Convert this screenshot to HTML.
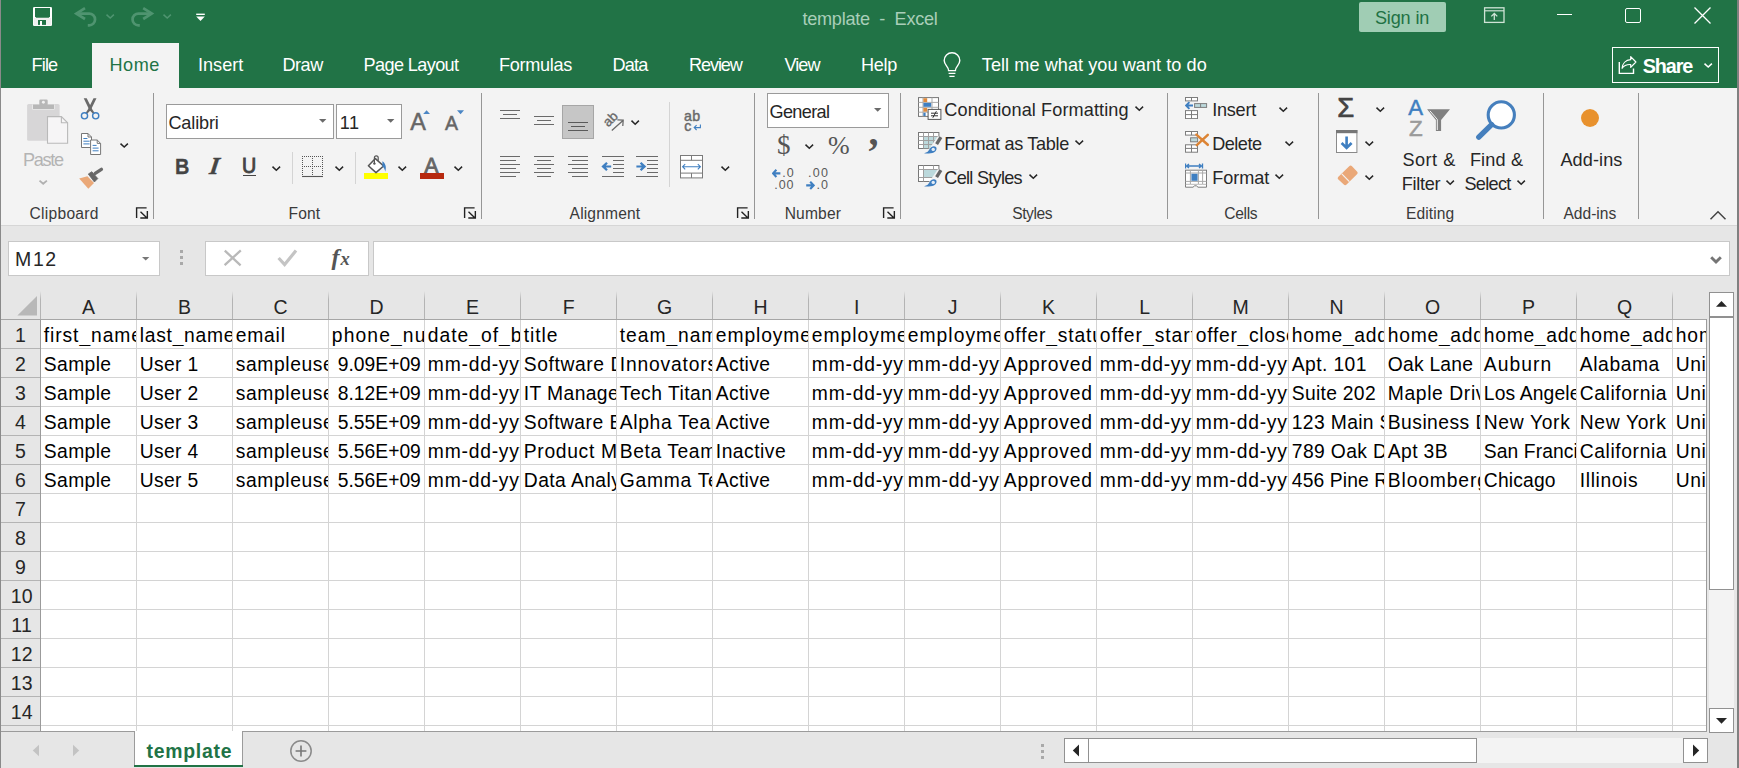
<!DOCTYPE html>
<html lang="en"><head><meta charset="utf-8"><title>template - Excel</title>
<style>
html,body{margin:0;padding:0;background:#fff;overflow:hidden}
#r{position:relative;width:1739px;height:768px;overflow:hidden;background:#e6e6e6;font-family:"Liberation Sans",sans-serif}
.a{position:absolute;display:block}
.t{white-space:pre}
.c{position:absolute;overflow:hidden;white-space:pre}
</style></head>
<body><div id="r">
<div class="a" style="left:0px;top:0px;width:1739px;height:88px;background:#217346;"></div>
<div class="a" style="left:0px;top:88px;width:1739px;height:138px;background:#f3f3f3;"></div>
<div class="a" style="left:0px;top:225px;width:1739px;height:1px;background:#d6d6d6;"></div>
<div class="a" style="left:0px;top:226px;width:1739px;height:542px;background:#e6e6e6;"></div>
<svg class="a" style="left:33px;top:7px" width="19" height="19" viewBox="0 0 19 19"><rect x="0" y="0" width="19" height="19" rx="1.2" fill="#fff"/><rect x="0.8" y="11" width="17.4" height="7.4" fill="#f0f0f0"/><path d="M2 1.1H17V9.6L15.8 10.8H3.2L2 9.6Z" fill="#217346"/><rect x="5" y="13" width="8" height="4.9" fill="#217346"/><rect x="7" y="14" width="2" height="5" fill="#fff"/></svg>
<svg class="a" style="left:74.2px;top:6px" width="25" height="23" viewBox="0 0 25 23"><path d="M11 2.2L2.4 7.6L11 13" fill="none" stroke="#4f9470" stroke-width="2.7" stroke-linejoin="miter"/><path d="M3.4 7.6H15.2A5.85 5.85 0 0 1 15.2 19.3H13.8" fill="none" stroke="#4f9470" stroke-width="2.7"/></svg>
<svg class="a" style="left:105.2px;top:13px" width="10.4" height="6.8" viewBox="0 0 10.4 6.8"><path d="M1.5 1.6 L5.2 5.0 L8.9 1.6" fill="none" stroke="#4f9470" stroke-width="1.5"/></svg>
<svg class="a" style="left:129px;top:6px" width="26" height="23" viewBox="0 0 26 23"><path d="M14.2 2.2L22.8 7.6L14.2 13" fill="none" stroke="#4f9470" stroke-width="2.7" stroke-linejoin="miter"/><path d="M21.8 7.6H9.4A5.85 5.85 0 0 0 9.4 19.3H10.8" fill="none" stroke="#4f9470" stroke-width="2.7"/></svg>
<svg class="a" style="left:162.1px;top:13px" width="10.4" height="6.8" viewBox="0 0 10.4 6.8"><path d="M1.5 1.6 L5.2 5.0 L8.9 1.6" fill="none" stroke="#4f9470" stroke-width="1.5"/></svg>
<svg class="a" style="left:195px;top:12px" width="12" height="10" viewBox="0 0 12 10"><rect x="1.2" y="1.6" width="8.6" height="1.4" fill="#fff"/><path d="M1.2 4.6h8.6l-4.3 4.3z" fill="#fff"/></svg>
<span class="a t" style="left:802.50px;top:9px;font:normal 400 18.1px/20px 'Liberation Sans',sans-serif;color:#a9ceb9;letter-spacing:-0.265px;">template  -  Excel</span>
<div class="a" style="left:1359px;top:2px;width:87px;height:30px;background:#a0cdb4;border-radius:2px;"></div>
<span class="a t" style="left:1374.90px;top:8px;font:normal 400 18.1px/20px 'Liberation Sans',sans-serif;color:#1f7244;letter-spacing:-0.150px;">Sign in</span>
<svg class="a" style="left:1483px;top:6px" width="24" height="19" viewBox="0 0 24 19"><rect x="1.6" y="1.8" width="19.4" height="14.6" fill="none" stroke="#cfe3d6" stroke-width="1.3"/><path d="M1.6 4.8H21" stroke="#cfe3d6" stroke-width="1.2"/><path d="M11.3 14V7.6M8.3 10.4l3-2.9 3 2.9" fill="none" stroke="#cfe3d6" stroke-width="1.3"/></svg>
<div class="a" style="left:1557px;top:14px;width:15px;height:1px;background:#ffffff;"></div>
<div class="a" style="left:1625px;top:8px;width:16px;height:15px;border:1px solid #ffffff;box-sizing:border-box;border-radius:2px;"></div>
<svg class="a" style="left:1693px;top:6px" width="19" height="19" viewBox="0 0 19 19"><path d="M1.5 1.5L17.5 17.5M17.5 1.5L1.5 17.5" stroke="#fff" stroke-width="1.3" fill="none"/></svg>
<div class="a" style="left:92px;top:43px;width:87px;height:45px;background:#f3f3f3;"></div>
<span class="a t" style="left:31.60px;top:55px;font:normal 400 18.1px/20px 'Liberation Sans',sans-serif;color:#ffffff;letter-spacing:-0.867px;">File</span>
<span class="a t" style="left:109.50px;top:55px;font:normal 400 18.1px/20px 'Liberation Sans',sans-serif;color:#217346;letter-spacing:0.500px;">Home</span>
<span class="a t" style="left:198.00px;top:55px;font:normal 400 18.1px/20px 'Liberation Sans',sans-serif;color:#ffffff;letter-spacing:0.000px;">Insert</span>
<span class="a t" style="left:282.50px;top:55px;font:normal 400 18.1px/20px 'Liberation Sans',sans-serif;color:#ffffff;letter-spacing:-0.500px;">Draw</span>
<span class="a t" style="left:363.50px;top:55px;font:normal 400 18.1px/20px 'Liberation Sans',sans-serif;color:#ffffff;letter-spacing:-0.600px;">Page Layout</span>
<span class="a t" style="left:499.00px;top:55px;font:normal 400 18.1px/20px 'Liberation Sans',sans-serif;color:#ffffff;letter-spacing:-0.286px;">Formulas</span>
<span class="a t" style="left:612.50px;top:55px;font:normal 400 18.1px/20px 'Liberation Sans',sans-serif;color:#ffffff;letter-spacing:-0.833px;">Data</span>
<span class="a t" style="left:689.00px;top:55px;font:normal 400 18.1px/20px 'Liberation Sans',sans-serif;color:#ffffff;letter-spacing:-1.100px;">Review</span>
<span class="a t" style="left:784.40px;top:55px;font:normal 400 18.1px/20px 'Liberation Sans',sans-serif;color:#ffffff;letter-spacing:-0.900px;">View</span>
<span class="a t" style="left:861.00px;top:55px;font:normal 400 18.1px/20px 'Liberation Sans',sans-serif;color:#ffffff;letter-spacing:-0.333px;">Help</span>
<span class="a t" style="left:981.80px;top:55px;font:normal 400 18.1px/20px 'Liberation Sans',sans-serif;color:#ffffff;letter-spacing:0.065px;">Tell me what you want to do</span>
<svg class="a" style="left:942px;top:52px" width="20" height="26" viewBox="0 0 20 26"><path d="M6.6 18.6 C6.6 14.5 2.2 13.2 2.2 8.6 a7.8 7.8 0 0 1 15.6 0 C17.8 13.2 13.4 14.5 13.4 18.6 Z" fill="none" stroke="#fff" stroke-width="1.4"/><path d="M6.6 21.3h6.8M7.4 24.3h5.2" stroke="#fff" stroke-width="1.3"/></svg>
<div class="a" style="left:1612px;top:47px;width:107px;height:36px;border:1px solid #ffffff;box-sizing:border-box;"></div>
<svg class="a" style="left:1616px;top:54px" width="24" height="22" viewBox="0 0 24 22"><path d="M3.3 8V19.4H17.5V14.4" fill="none" stroke="#fff" stroke-width="1.4"/><path d="M14.7 2.6L19.9 8L14.7 13.3V10.5C10.6 10.3 8 11.3 6.1 14.3C6.4 9.5 9.6 6 14.7 5.7Z" fill="none" stroke="#fff" stroke-width="1.2" stroke-linejoin="round"/></svg>
<span class="a t" style="left:1642.80px;top:55px;font:normal 700 19.8px/22px 'Liberation Sans',sans-serif;color:#ffffff;letter-spacing:-1.125px;">Share</span>
<svg class="a" style="left:1703px;top:62.2px" width="10.4" height="6.8" viewBox="0 0 10.4 6.8"><path d="M1.5 1.6 L5.2 5.0 L8.9 1.6" fill="none" stroke="#ffffff" stroke-width="1.5"/></svg>
<div class="a" style="left:0px;top:0px;width:1px;height:768px;background:#8a8a8a;"></div>
<div class="a" style="left:1737px;top:0px;width:2px;height:768px;background:#808080;"></div>
<div class="a" style="left:153px;top:93px;width:1px;height:126px;background:#969696;"></div>
<div class="a" style="left:481px;top:93px;width:1px;height:126px;background:#969696;"></div>
<div class="a" style="left:754px;top:93px;width:1px;height:126px;background:#969696;"></div>
<div class="a" style="left:900px;top:93px;width:1px;height:126px;background:#969696;"></div>
<div class="a" style="left:1167px;top:93px;width:1px;height:126px;background:#969696;"></div>
<div class="a" style="left:1318px;top:93px;width:1px;height:126px;background:#969696;"></div>
<div class="a" style="left:1543px;top:93px;width:1px;height:126px;background:#969696;"></div>
<div class="a" style="left:1638px;top:93px;width:1px;height:126px;background:#969696;"></div>
<div class="a" style="left:292px;top:152px;width:1px;height:32px;background:#d4d4d4;"></div>
<div class="a" style="left:355px;top:152px;width:1px;height:32px;background:#d4d4d4;"></div>
<div class="a" style="left:669px;top:102px;width:1px;height:85px;background:#d4d4d4;"></div>
<span class="a t" style="left:29.50px;top:205px;font:normal 400 15.6px/17px 'Liberation Sans',sans-serif;color:#3a3a3a;letter-spacing:0.275px;">Clipboard</span>
<span class="a t" style="left:288.50px;top:205px;font:normal 400 15.6px/17px 'Liberation Sans',sans-serif;color:#3a3a3a;letter-spacing:0.167px;">Font</span>
<span class="a t" style="left:569.60px;top:205px;font:normal 400 15.6px/17px 'Liberation Sans',sans-serif;color:#3a3a3a;letter-spacing:0.150px;">Alignment</span>
<span class="a t" style="left:784.70px;top:205px;font:normal 400 15.6px/17px 'Liberation Sans',sans-serif;color:#3a3a3a;letter-spacing:0.160px;">Number</span>
<span class="a t" style="left:1012.30px;top:205px;font:normal 400 15.6px/17px 'Liberation Sans',sans-serif;color:#3a3a3a;letter-spacing:-0.460px;">Styles</span>
<span class="a t" style="left:1224.20px;top:205px;font:normal 400 15.6px/17px 'Liberation Sans',sans-serif;color:#3a3a3a;letter-spacing:-0.300px;">Cells</span>
<span class="a t" style="left:1405.90px;top:205px;font:normal 400 15.6px/17px 'Liberation Sans',sans-serif;color:#3a3a3a;letter-spacing:0.117px;">Editing</span>
<span class="a t" style="left:1563.40px;top:205px;font:normal 400 15.6px/17px 'Liberation Sans',sans-serif;color:#3a3a3a;letter-spacing:0.000px;">Add-ins</span>
<svg class="a" style="left:134.6px;top:207px" width="14" height="13" viewBox="0 0 14 13"><path d="M1.6 11V0.9H11.6M5.5 4.8L12 11M12.35 4.1V11.05H5.3" fill="none" stroke="#222" stroke-width="1.4"/></svg>
<svg class="a" style="left:462.6px;top:207px" width="14" height="13" viewBox="0 0 14 13"><path d="M1.6 11V0.9H11.6M5.5 4.8L12 11M12.35 4.1V11.05H5.3" fill="none" stroke="#222" stroke-width="1.4"/></svg>
<svg class="a" style="left:736px;top:207px" width="14" height="13" viewBox="0 0 14 13"><path d="M1.6 11V0.9H11.6M5.5 4.8L12 11M12.35 4.1V11.05H5.3" fill="none" stroke="#222" stroke-width="1.4"/></svg>
<svg class="a" style="left:881.6px;top:207px" width="14" height="13" viewBox="0 0 14 13"><path d="M1.6 11V0.9H11.6M5.5 4.8L12 11M12.35 4.1V11.05H5.3" fill="none" stroke="#222" stroke-width="1.4"/></svg>
<svg class="a" style="left:1709px;top:210px" width="18" height="11" viewBox="0 0 18 11"><path d="M1.5 9.2L9 1.8L16.5 9.2" fill="none" stroke="#444" stroke-width="1.5"/></svg>
<span class="a t" style="left:23.00px;top:150px;font:normal 400 18.1px/20px 'Liberation Sans',sans-serif;color:#b4b4b4;letter-spacing:-1.300px;">Paste</span>
<svg class="a" style="left:38.2px;top:179.3px" width="10.4" height="6.6" viewBox="0 0 10.4 6.6"><path d="M1.5 1.6 L5.2 4.8 L8.9 1.6" fill="none" stroke="#b0b0b0" stroke-width="1.8"/></svg>
<svg class="a" style="left:119px;top:142.2px" width="10.4" height="6.8" viewBox="0 0 10.4 6.8"><path d="M1.5 1.6 L5.2 5.0 L8.9 1.6" fill="none" stroke="#262626" stroke-width="1.5"/></svg>
<div class="a" style="left:166px;top:104px;width:168px;height:35px;background:#fff;border:1px solid #9a9a9a;box-sizing:border-box;"></div>
<div class="a" style="left:336px;top:104px;width:66px;height:35px;background:#fff;border:1px solid #9a9a9a;box-sizing:border-box;"></div>
<span class="a t" style="left:168.40px;top:113px;font:normal 400 18.1px/20px 'Liberation Sans',sans-serif;color:#262626;letter-spacing:-0.133px;">Calibri</span>
<span class="a t" style="left:339.80px;top:113px;font:normal 400 18.1px/20px 'Liberation Sans',sans-serif;color:#262626;letter-spacing:0.600px;">11</span>
<svg class="a" style="left:319px;top:119px" width="9" height="5" viewBox="0 0 9 5"><path d="M0 0H7.4L3.7 3.8Z" fill="#6a6a6a"/></svg>
<svg class="a" style="left:386.7px;top:119px" width="9" height="5" viewBox="0 0 9 5"><path d="M0 0H7.4L3.7 3.8Z" fill="#6a6a6a"/></svg>
<span class="a t" style="left:410.30px;top:109px;font:normal 400 23.4px/26px 'Liberation Sans',sans-serif;color:#666;letter-spacing:0.000px;-webkit-text-stroke:0.5px #666;">A</span>
<span class="a t" style="left:445.00px;top:112px;font:normal 400 19.5px/22px 'Liberation Sans',sans-serif;color:#666;letter-spacing:0.000px;-webkit-text-stroke:0.5px #666;">A</span>
<svg class="a" style="left:423px;top:109.6px" width="8" height="5" viewBox="0 0 8 5"><path d="M0.2 4.1L3.6 0.3L7 4.1Z" fill="#4a86c5"/></svg>
<svg class="a" style="left:457px;top:110px" width="8" height="5" viewBox="0 0 8 5"><path d="M0 0.2H7L3.5 4.2Z" fill="#4a86c5"/></svg>
<span class="a t" style="left:174.90px;top:153px;font:normal 700 22.9px/26px 'Liberation Sans',sans-serif;color:#444;letter-spacing:0.000px;-webkit-text-stroke:0.3px #444;transform:scaleX(.87);transform-origin:left;">B</span>
<span class="a t" style="left:210.20px;top:152px;font:italic 700 24.4px/27px 'Liberation Serif',serif;color:#444;letter-spacing:0.000px;transform:skewX(-8deg);-webkit-text-stroke:0.4px #444;">I</span>
<span class="a t" style="left:242.10px;top:154px;font:normal 400 21.2px/23px 'Liberation Sans',sans-serif;color:#444;letter-spacing:0.000px;-webkit-text-stroke:0.9px #444;transform:scaleX(.93);transform-origin:left;">U</span>
<div class="a" style="left:243px;top:174.7px;width:13px;height:1.4px;background:#444;"></div>
<svg class="a" style="left:271.2px;top:164.8px" width="10.6" height="7" viewBox="0 0 10.6 7"><path d="M1.5 1.6 L5.3 5.2 L9.1 1.6" fill="none" stroke="#262626" stroke-width="1.5"/></svg>
<svg class="a" style="left:334.2px;top:164.8px" width="10.6" height="7" viewBox="0 0 10.6 7"><path d="M1.5 1.6 L5.3 5.2 L9.1 1.6" fill="none" stroke="#262626" stroke-width="1.5"/></svg>
<svg class="a" style="left:396.9px;top:164.8px" width="10.6" height="7" viewBox="0 0 10.6 7"><path d="M1.5 1.6 L5.3 5.2 L9.1 1.6" fill="none" stroke="#262626" stroke-width="1.5"/></svg>
<svg class="a" style="left:452.9px;top:164.8px" width="10.6" height="7" viewBox="0 0 10.6 7"><path d="M1.5 1.6 L5.3 5.2 L9.1 1.6" fill="none" stroke="#262626" stroke-width="1.5"/></svg>
<svg class="a" style="left:302px;top:156px" width="22" height="22" viewBox="0 0 22 22"><path d="M0 0.5H21M0 10.5H21M0.5 0V20M10.5 0V20M20.5 0V20" fill="none" stroke="#555" stroke-width="1" stroke-dasharray="1 1" shape-rendering="crispEdges"/><path d="M0 20.5H21" stroke="#555" stroke-width="1.1"/></svg>
<div class="a" style="left:364px;top:173px;width:24px;height:6px;background:#ffff00;"></div>
<svg class="a" style="left:366px;top:155.4px" width="22" height="19" viewBox="0 0 22 19"><path d="M9.4 3.6 L17.6 11 L10 17.6 L2.4 10.8 Z" fill="#fff" stroke="#555" stroke-width="1.5" stroke-linejoin="round"/><path d="M8.4 8.2V2.8a1.9 1.9 0 0 1 3.8 0V5.8" fill="none" stroke="#555" stroke-width="1.2"/><circle cx="8.4" cy="8.6" r="1.2" fill="#555"/><path d="M16.4 6.2c3 2 4.4 5.6 2.8 10.6c-.3-2.6-1-4.2-2.8-5.4z" fill="#3f7fc1"/></svg>
<span class="a t" style="left:424.20px;top:154px;font:normal 400 21.4px/24px 'Liberation Sans',sans-serif;color:#666;letter-spacing:0.000px;-webkit-text-stroke:0.8px #666;">A</span>
<div class="a" style="left:420px;top:173px;width:24px;height:6px;background:#b7290f;"></div>
<div class="a" style="left:500px;top:110px;width:20px;height:1px;background:#6a6a6a;"></div>
<div class="a" style="left:503px;top:114px;width:14px;height:1px;background:#6a6a6a;"></div>
<div class="a" style="left:500px;top:118px;width:20px;height:1px;background:#6a6a6a;"></div>
<div class="a" style="left:534px;top:116px;width:20px;height:1px;background:#6a6a6a;"></div>
<div class="a" style="left:537px;top:120px;width:14px;height:1px;background:#6a6a6a;"></div>
<div class="a" style="left:534px;top:124px;width:20px;height:1px;background:#6a6a6a;"></div>
<div class="a" style="left:562px;top:105px;width:32px;height:34px;background:#c6c6c6;border:1px solid #a6a6a6;box-sizing:border-box;"></div>
<div class="a" style="left:568px;top:122px;width:20px;height:1px;background:#5a5a5a;"></div>
<div class="a" style="left:571px;top:126px;width:14px;height:1px;background:#5a5a5a;"></div>
<div class="a" style="left:568px;top:130px;width:20px;height:1px;background:#5a5a5a;"></div>
<svg class="a" style="left:601px;top:110px" width="25" height="23" viewBox="0 0 25 23"><text x="0" y="0" transform="translate(7.2 17.4) rotate(-45)" font-family="Liberation Sans,sans-serif" font-size="13.4" fill="#6a6a6a" stroke="#6a6a6a" stroke-width="0.35">ab</text><path d="M10.8 20.6L22 10.4M16.4 9.8L22.2 10.2L21.8 16" fill="none" stroke="#6a6a6a" stroke-width="1.3"/></svg>
<svg class="a" style="left:630px;top:119px" width="10.4" height="7" viewBox="0 0 10.4 7"><path d="M1.5 1.6 L5.2 5.2 L8.9 1.6" fill="none" stroke="#262626" stroke-width="1.5"/></svg>
<div class="a" style="left:500px;top:156px;width:20px;height:1px;background:#6a6a6a;"></div>
<div class="a" style="left:500px;top:160px;width:16px;height:1px;background:#6a6a6a;"></div>
<div class="a" style="left:500px;top:164px;width:20px;height:1px;background:#6a6a6a;"></div>
<div class="a" style="left:500px;top:168px;width:16px;height:1px;background:#6a6a6a;"></div>
<div class="a" style="left:500px;top:172px;width:20px;height:1px;background:#6a6a6a;"></div>
<div class="a" style="left:500px;top:176px;width:16px;height:1px;background:#6a6a6a;"></div>
<div class="a" style="left:534px;top:156px;width:20px;height:1px;background:#6a6a6a;"></div>
<div class="a" style="left:537px;top:160px;width:14px;height:1px;background:#6a6a6a;"></div>
<div class="a" style="left:534px;top:164px;width:20px;height:1px;background:#6a6a6a;"></div>
<div class="a" style="left:537px;top:168px;width:14px;height:1px;background:#6a6a6a;"></div>
<div class="a" style="left:534px;top:172px;width:20px;height:1px;background:#6a6a6a;"></div>
<div class="a" style="left:537px;top:176px;width:14px;height:1px;background:#6a6a6a;"></div>
<div class="a" style="left:568px;top:156px;width:20px;height:1px;background:#6a6a6a;"></div>
<div class="a" style="left:572px;top:160px;width:16px;height:1px;background:#6a6a6a;"></div>
<div class="a" style="left:568px;top:164px;width:20px;height:1px;background:#6a6a6a;"></div>
<div class="a" style="left:572px;top:168px;width:16px;height:1px;background:#6a6a6a;"></div>
<div class="a" style="left:568px;top:172px;width:20px;height:1px;background:#6a6a6a;"></div>
<div class="a" style="left:572px;top:176px;width:16px;height:1px;background:#6a6a6a;"></div>
<div class="a" style="left:602px;top:156px;width:22px;height:1px;background:#6a6a6a;"></div>
<div class="a" style="left:613px;top:160px;width:11px;height:1px;background:#6a6a6a;"></div>
<div class="a" style="left:613px;top:164px;width:11px;height:1px;background:#6a6a6a;"></div>
<div class="a" style="left:613px;top:168px;width:11px;height:1px;background:#6a6a6a;"></div>
<div class="a" style="left:613px;top:172px;width:11px;height:1px;background:#6a6a6a;"></div>
<div class="a" style="left:602px;top:176px;width:22px;height:1px;background:#6a6a6a;"></div>
<div class="a" style="left:636px;top:156px;width:22px;height:1px;background:#6a6a6a;"></div>
<div class="a" style="left:647px;top:160px;width:11px;height:1px;background:#6a6a6a;"></div>
<div class="a" style="left:647px;top:164px;width:11px;height:1px;background:#6a6a6a;"></div>
<div class="a" style="left:647px;top:168px;width:11px;height:1px;background:#6a6a6a;"></div>
<div class="a" style="left:647px;top:172px;width:11px;height:1px;background:#6a6a6a;"></div>
<div class="a" style="left:636px;top:176px;width:22px;height:1px;background:#6a6a6a;"></div>
<svg class="a" style="left:601px;top:161px" width="11" height="11" viewBox="0 0 11 11"><path d="M0.4 5.5L5.2 0.9L6.8 2.5L4.9 4.4H10.2V6.6H4.9L6.8 8.5L5.2 10.1Z" fill="#3f7fc1"/></svg>
<svg class="a" style="left:636px;top:161px" width="11" height="11" viewBox="0 0 11 11"><path d="M10.2 5.5L5.4 0.9L3.8 2.5L5.7 4.4H0.4V6.6H5.7L3.8 8.5L5.4 10.1Z" fill="#3f7fc1"/></svg>
<span class="a t" style="left:684.00px;top:108px;font:normal 400 14.2px/16px 'Liberation Sans',sans-serif;color:#6a6a6a;letter-spacing:0.400px;-webkit-text-stroke:0.45px #6a6a6a;">ab</span>
<span class="a t" style="left:684.30px;top:118px;font:normal 400 14.2px/16px 'Liberation Sans',sans-serif;color:#6a6a6a;letter-spacing:0.000px;-webkit-text-stroke:0.45px #6a6a6a;">c</span>
<svg class="a" style="left:692.5px;top:123.8px" width="9" height="7" viewBox="0 0 9 7"><path d="M7.4 0.4V3.6H1.4M3.6 1.2L1.2 3.6L3.6 6" fill="none" stroke="#3f7fc1" stroke-width="1.1"/></svg>
<svg class="a" style="left:680px;top:155px" width="23" height="24" viewBox="0 0 23 24"><rect x="0.5" y="0.5" width="22" height="22.4" fill="#fff" stroke="#7a7a7a"/><path d="M0.5 5.3H22.5M0.5 18.1H22.5M11.5 0.5V5.3M11.5 18.1V22.9" stroke="#7a7a7a" fill="none"/><path d="M2.6 11.7H20.4M5.2 9.1L2.6 11.7L5.2 14.3M17.8 9.1L20.4 11.7L17.8 14.3" fill="none" stroke="#3f7fc1" stroke-width="1.1"/></svg>
<svg class="a" style="left:719.9px;top:164.8px" width="10.6" height="7" viewBox="0 0 10.6 7"><path d="M1.5 1.6 L5.3 5.2 L9.1 1.6" fill="none" stroke="#262626" stroke-width="1.5"/></svg>
<div class="a" style="left:767px;top:93px;width:122px;height:35px;background:#fff;border:1px solid #9a9a9a;box-sizing:border-box;"></div>
<span class="a t" style="left:769.50px;top:102px;font:normal 400 18.1px/20px 'Liberation Sans',sans-serif;color:#262626;letter-spacing:-0.650px;">General</span>
<svg class="a" style="left:873.5px;top:108px" width="9" height="5" viewBox="0 0 9 5"><path d="M0 0H7.4L3.7 3.8Z" fill="#6a6a6a"/></svg>
<span class="a t" style="left:776.90px;top:130px;font:normal 400 27px/30px 'Liberation Serif',serif;color:#555;letter-spacing:0.000px;">$</span>
<svg class="a" style="left:804.1px;top:142.8px" width="10.6" height="7" viewBox="0 0 10.6 7"><path d="M1.5 1.6 L5.3 5.2 L9.1 1.6" fill="none" stroke="#262626" stroke-width="1.5"/></svg>
<span class="a t" style="left:828.00px;top:131px;font:normal 400 26px/29px 'Liberation Serif',serif;color:#555;letter-spacing:0.000px;">%</span>
<span class="a t" style="left:868.60px;top:109px;font:normal 700 40px/45px 'Liberation Serif',serif;color:#555;letter-spacing:0.000px;">,</span>
<span class="a t" style="left:782.30px;top:166px;font:normal 400 12.5px/14px 'Liberation Sans',sans-serif;color:#5a5a5a;letter-spacing:0.900px;">.0</span>
<span class="a t" style="left:808.10px;top:166px;font:normal 400 12.5px/14px 'Liberation Sans',sans-serif;color:#5a5a5a;letter-spacing:1.250px;">.00</span>
<span class="a t" style="left:774.20px;top:178px;font:normal 400 12.5px/14px 'Liberation Sans',sans-serif;color:#5a5a5a;letter-spacing:1.000px;">.00</span>
<span class="a t" style="left:816.60px;top:178px;font:normal 400 12.5px/14px 'Liberation Sans',sans-serif;color:#5a5a5a;letter-spacing:1.000px;">.0</span>
<svg class="a" style="left:772px;top:169px" width="9" height="9" viewBox="0 0 9 9"><path d="M1 4.4H8.4M4.4 0.8L1 4.4L4.4 8" fill="none" stroke="#3f7fc1" stroke-width="2.1"/></svg>
<svg class="a" style="left:806px;top:181px" width="9" height="9" viewBox="0 0 9 9"><path d="M0.2 4.4H7.6M4.2 0.8L7.6 4.4L4.2 8" fill="none" stroke="#3f7fc1" stroke-width="2.1"/></svg>
<span class="a t" style="left:944.30px;top:100px;font:normal 400 18.1px/20px 'Liberation Sans',sans-serif;color:#262626;letter-spacing:0.105px;">Conditional Formatting</span>
<svg class="a" style="left:1134px;top:105.4px" width="10.6" height="7" viewBox="0 0 10.6 7"><path d="M1.5 1.6 L5.3 5.2 L9.1 1.6" fill="none" stroke="#262626" stroke-width="1.5"/></svg>
<span class="a t" style="left:944.30px;top:134px;font:normal 400 18.1px/20px 'Liberation Sans',sans-serif;color:#262626;letter-spacing:-0.307px;">Format as Table</span>
<svg class="a" style="left:1074.2px;top:139.2px" width="10.6" height="7" viewBox="0 0 10.6 7"><path d="M1.5 1.6 L5.3 5.2 L9.1 1.6" fill="none" stroke="#262626" stroke-width="1.5"/></svg>
<span class="a t" style="left:944.30px;top:168px;font:normal 400 18.1px/20px 'Liberation Sans',sans-serif;color:#262626;letter-spacing:-0.710px;">Cell Styles</span>
<svg class="a" style="left:1027.7px;top:173px" width="10.6" height="7" viewBox="0 0 10.6 7"><path d="M1.5 1.6 L5.3 5.2 L9.1 1.6" fill="none" stroke="#262626" stroke-width="1.5"/></svg>
<span class="a t" style="left:1212.20px;top:100px;font:normal 400 18.1px/20px 'Liberation Sans',sans-serif;color:#262626;letter-spacing:-0.240px;">Insert</span>
<svg class="a" style="left:1277.8px;top:105.6px" width="10.6" height="7" viewBox="0 0 10.6 7"><path d="M1.5 1.6 L5.3 5.2 L9.1 1.6" fill="none" stroke="#262626" stroke-width="1.5"/></svg>
<span class="a t" style="left:1212.20px;top:134px;font:normal 400 18.1px/20px 'Liberation Sans',sans-serif;color:#262626;letter-spacing:-0.500px;">Delete</span>
<svg class="a" style="left:1284.1px;top:139.8px" width="10.6" height="7" viewBox="0 0 10.6 7"><path d="M1.5 1.6 L5.3 5.2 L9.1 1.6" fill="none" stroke="#262626" stroke-width="1.5"/></svg>
<span class="a t" style="left:1212.20px;top:168px;font:normal 400 18.1px/20px 'Liberation Sans',sans-serif;color:#262626;letter-spacing:-0.040px;">Format</span>
<svg class="a" style="left:1274.1px;top:173.2px" width="10.6" height="7" viewBox="0 0 10.6 7"><path d="M1.5 1.6 L5.3 5.2 L9.1 1.6" fill="none" stroke="#262626" stroke-width="1.5"/></svg>
<span class="a t" style="left:1337.20px;top:92px;font:normal 400 27.5px/31px 'Liberation Sans',sans-serif;color:#444;letter-spacing:0.000px;-webkit-text-stroke:0.7px #444;">Σ</span>
<svg class="a" style="left:1375.1px;top:105.6px" width="10.6" height="7" viewBox="0 0 10.6 7"><path d="M1.5 1.6 L5.3 5.2 L9.1 1.6" fill="none" stroke="#262626" stroke-width="1.5"/></svg>
<svg class="a" style="left:1364.1px;top:139.8px" width="10.6" height="7" viewBox="0 0 10.6 7"><path d="M1.5 1.6 L5.3 5.2 L9.1 1.6" fill="none" stroke="#262626" stroke-width="1.5"/></svg>
<svg class="a" style="left:1364.1px;top:173.6px" width="10.6" height="7" viewBox="0 0 10.6 7"><path d="M1.5 1.6 L5.3 5.2 L9.1 1.6" fill="none" stroke="#262626" stroke-width="1.5"/></svg>
<span class="a t" style="left:1402.40px;top:150px;font:normal 400 18.1px/20px 'Liberation Sans',sans-serif;color:#262626;letter-spacing:0.520px;">Sort &amp;</span>
<span class="a t" style="left:1401.80px;top:174px;font:normal 400 18.1px/20px 'Liberation Sans',sans-serif;color:#262626;letter-spacing:-0.300px;">Filter</span>
<svg class="a" style="left:1445.2px;top:178.8px" width="10.4" height="7" viewBox="0 0 10.4 7"><path d="M1.5 1.6 L5.2 5.2 L8.9 1.6" fill="none" stroke="#262626" stroke-width="1.5"/></svg>
<span class="a t" style="left:1469.90px;top:150px;font:normal 400 18.1px/20px 'Liberation Sans',sans-serif;color:#262626;letter-spacing:0.160px;">Find &amp;</span>
<span class="a t" style="left:1464.40px;top:174px;font:normal 400 18.1px/20px 'Liberation Sans',sans-serif;color:#262626;letter-spacing:-0.680px;">Select</span>
<svg class="a" style="left:1516.2px;top:178.8px" width="10.4" height="7" viewBox="0 0 10.4 7"><path d="M1.5 1.6 L5.2 5.2 L8.9 1.6" fill="none" stroke="#262626" stroke-width="1.5"/></svg>
<span class="a t" style="left:1408.30px;top:95px;font:normal 400 22.2px/25px 'Liberation Sans',sans-serif;color:#3f7fc1;letter-spacing:0.000px;-webkit-text-stroke:0.5px #3f7fc1;">A</span>
<span class="a t" style="left:1409.00px;top:116px;font:normal 400 22.4px/25px 'Liberation Sans',sans-serif;color:#9a9a9a;letter-spacing:0.000px;-webkit-text-stroke:0.5px #9a9a9a;">Z</span>
<svg class="a" style="left:1425px;top:107px" width="27" height="26" viewBox="1425 107 27 26"><path d="M1427.1 109.2H1450L1441.1 119.9V130.9H1435.9V119.9Z" fill="#808080"/><path d="M1429.9 110.8L1437.3 119.4V130" fill="none" stroke="#f3f3f3" stroke-width="1"/></svg>
<svg class="a" style="left:1474px;top:98px" width="44" height="44" viewBox="0 0 44 44"><circle cx="27.3" cy="16.9" r="13.1" fill="#fff" stroke="#457fbd" stroke-width="3.1"/><path d="M17.6 26.6L4.8 39.2" stroke="#457fbd" stroke-width="5.4" stroke-linecap="round"/></svg>
<div class="a" style="left:1580.6px;top:109.1px;width:18px;height:18px;border-radius:50%;background:radial-gradient(circle,#e8912d 0,#e8912d 66%,rgba(232,145,45,0.6) 82%,rgba(232,145,45,0) 100%)"></div>
<span class="a t" style="left:1560.40px;top:150px;font:normal 400 18.1px/20px 'Liberation Sans',sans-serif;color:#262626;letter-spacing:0.100px;">Add-ins</span>
<div class="a" style="left:8px;top:241px;width:152px;height:35px;background:#fff;border:1px solid #c8c8c8;box-sizing:border-box;"></div>
<span class="a t" style="left:15.10px;top:248px;font:normal 400 19.5px/22px 'Liberation Sans',sans-serif;color:#262626;letter-spacing:1.550px;">M12</span>
<svg class="a" style="left:141.5px;top:256.6px" width="9" height="5" viewBox="0 0 9 5"><path d="M0 0H7.4L3.7 3.6Z" fill="#777"/></svg>
<div class="a" style="left:180px;top:250px;width:3px;height:3px;background:#a9a9a9;"></div>
<div class="a" style="left:180px;top:256px;width:3px;height:3px;background:#a9a9a9;"></div>
<div class="a" style="left:180px;top:262px;width:3px;height:3px;background:#a9a9a9;"></div>
<div class="a" style="left:205px;top:241px;width:164px;height:35px;background:#fff;border:1px solid #c8c8c8;box-sizing:border-box;"></div>
<svg class="a" style="left:223px;top:249px" width="20" height="18" viewBox="0 0 20 18"><path d="M1.8 1.6L17.6 16.4M17.8 1.4L1.6 16.2" fill="none" stroke="#b9b9b9" stroke-width="2.3"/></svg>
<svg class="a" style="left:276px;top:249px" width="22" height="19" viewBox="0 0 22 19"><path d="M2.6 9L8.6 15.6L20 1.6" fill="none" stroke="#c4c4c4" stroke-width="3.2"/></svg>
<span class="a t" style="left:331.40px;top:244px;font:italic 700 24px/26px 'Liberation Serif',serif;color:#555;letter-spacing:0.000px;">f</span>
<span class="a t" style="left:340.40px;top:249px;font:italic 700 18.5px/20px 'Liberation Serif',serif;color:#555;letter-spacing:0.000px;">x</span>
<div class="a" style="left:373px;top:241px;width:1357px;height:35px;background:#fff;border:1px solid #c8c8c8;box-sizing:border-box;"></div>
<svg class="a" style="left:1709.4px;top:255px" width="14" height="10" viewBox="0 0 14 10"><path d="M2.2 2.2L7 7L11.8 2.2" fill="none" stroke="#757575" stroke-width="2.9"/></svg>
<div class="a" style="left:41px;top:320px;width:1665px;height:411px;background:#fff;"></div>
<div class="a" style="left:136px;top:320px;width:1px;height:411px;background:#d4d4d4;"></div>
<div class="a" style="left:232px;top:320px;width:1px;height:411px;background:#d4d4d4;"></div>
<div class="a" style="left:328px;top:320px;width:1px;height:411px;background:#d4d4d4;"></div>
<div class="a" style="left:424px;top:320px;width:1px;height:411px;background:#d4d4d4;"></div>
<div class="a" style="left:520px;top:320px;width:1px;height:411px;background:#d4d4d4;"></div>
<div class="a" style="left:616px;top:320px;width:1px;height:411px;background:#d4d4d4;"></div>
<div class="a" style="left:712px;top:320px;width:1px;height:411px;background:#d4d4d4;"></div>
<div class="a" style="left:808px;top:320px;width:1px;height:411px;background:#d4d4d4;"></div>
<div class="a" style="left:904px;top:320px;width:1px;height:411px;background:#d4d4d4;"></div>
<div class="a" style="left:1000px;top:320px;width:1px;height:411px;background:#d4d4d4;"></div>
<div class="a" style="left:1096px;top:320px;width:1px;height:411px;background:#d4d4d4;"></div>
<div class="a" style="left:1192px;top:320px;width:1px;height:411px;background:#d4d4d4;"></div>
<div class="a" style="left:1288px;top:320px;width:1px;height:411px;background:#d4d4d4;"></div>
<div class="a" style="left:1384px;top:320px;width:1px;height:411px;background:#d4d4d4;"></div>
<div class="a" style="left:1480px;top:320px;width:1px;height:411px;background:#d4d4d4;"></div>
<div class="a" style="left:1576px;top:320px;width:1px;height:411px;background:#d4d4d4;"></div>
<div class="a" style="left:1672px;top:320px;width:1px;height:411px;background:#d4d4d4;"></div>
<div class="a" style="left:41px;top:348px;width:1665px;height:1px;background:#d4d4d4;"></div>
<div class="a" style="left:41px;top:377px;width:1665px;height:1px;background:#d4d4d4;"></div>
<div class="a" style="left:41px;top:406px;width:1665px;height:1px;background:#d4d4d4;"></div>
<div class="a" style="left:41px;top:435px;width:1665px;height:1px;background:#d4d4d4;"></div>
<div class="a" style="left:41px;top:464px;width:1665px;height:1px;background:#d4d4d4;"></div>
<div class="a" style="left:41px;top:493px;width:1665px;height:1px;background:#d4d4d4;"></div>
<div class="a" style="left:41px;top:522px;width:1665px;height:1px;background:#d4d4d4;"></div>
<div class="a" style="left:41px;top:551px;width:1665px;height:1px;background:#d4d4d4;"></div>
<div class="a" style="left:41px;top:580px;width:1665px;height:1px;background:#d4d4d4;"></div>
<div class="a" style="left:41px;top:609px;width:1665px;height:1px;background:#d4d4d4;"></div>
<div class="a" style="left:41px;top:638px;width:1665px;height:1px;background:#d4d4d4;"></div>
<div class="a" style="left:41px;top:667px;width:1665px;height:1px;background:#d4d4d4;"></div>
<div class="a" style="left:41px;top:696px;width:1665px;height:1px;background:#d4d4d4;"></div>
<div class="a" style="left:41px;top:725px;width:1665px;height:1px;background:#d4d4d4;"></div>
<div class="a" style="left:40px;top:291px;width:1px;height:28px;background:linear-gradient(#e6e6e6,#b4b4b4 30%,#b4b4b4)"></div>
<div class="a" style="left:136px;top:291px;width:1px;height:28px;background:linear-gradient(#e6e6e6,#b4b4b4 30%,#b4b4b4)"></div>
<div class="a" style="left:232px;top:291px;width:1px;height:28px;background:linear-gradient(#e6e6e6,#b4b4b4 30%,#b4b4b4)"></div>
<div class="a" style="left:328px;top:291px;width:1px;height:28px;background:linear-gradient(#e6e6e6,#b4b4b4 30%,#b4b4b4)"></div>
<div class="a" style="left:424px;top:291px;width:1px;height:28px;background:linear-gradient(#e6e6e6,#b4b4b4 30%,#b4b4b4)"></div>
<div class="a" style="left:520px;top:291px;width:1px;height:28px;background:linear-gradient(#e6e6e6,#b4b4b4 30%,#b4b4b4)"></div>
<div class="a" style="left:616px;top:291px;width:1px;height:28px;background:linear-gradient(#e6e6e6,#b4b4b4 30%,#b4b4b4)"></div>
<div class="a" style="left:712px;top:291px;width:1px;height:28px;background:linear-gradient(#e6e6e6,#b4b4b4 30%,#b4b4b4)"></div>
<div class="a" style="left:808px;top:291px;width:1px;height:28px;background:linear-gradient(#e6e6e6,#b4b4b4 30%,#b4b4b4)"></div>
<div class="a" style="left:904px;top:291px;width:1px;height:28px;background:linear-gradient(#e6e6e6,#b4b4b4 30%,#b4b4b4)"></div>
<div class="a" style="left:1000px;top:291px;width:1px;height:28px;background:linear-gradient(#e6e6e6,#b4b4b4 30%,#b4b4b4)"></div>
<div class="a" style="left:1096px;top:291px;width:1px;height:28px;background:linear-gradient(#e6e6e6,#b4b4b4 30%,#b4b4b4)"></div>
<div class="a" style="left:1192px;top:291px;width:1px;height:28px;background:linear-gradient(#e6e6e6,#b4b4b4 30%,#b4b4b4)"></div>
<div class="a" style="left:1288px;top:291px;width:1px;height:28px;background:linear-gradient(#e6e6e6,#b4b4b4 30%,#b4b4b4)"></div>
<div class="a" style="left:1384px;top:291px;width:1px;height:28px;background:linear-gradient(#e6e6e6,#b4b4b4 30%,#b4b4b4)"></div>
<div class="a" style="left:1480px;top:291px;width:1px;height:28px;background:linear-gradient(#e6e6e6,#b4b4b4 30%,#b4b4b4)"></div>
<div class="a" style="left:1576px;top:291px;width:1px;height:28px;background:linear-gradient(#e6e6e6,#b4b4b4 30%,#b4b4b4)"></div>
<div class="a" style="left:1672px;top:291px;width:1px;height:28px;background:linear-gradient(#e6e6e6,#b4b4b4 30%,#b4b4b4)"></div>
<div class="a" style="left:1px;top:319px;width:1706px;height:1px;background:#a6a6a6;"></div>
<div class="a" style="left:40px;top:320px;width:1px;height:411px;background:#9b9b9b;"></div>
<div class="a" style="left:1px;top:348px;width:39px;height:1px;background:#b4b4b4;"></div>
<div class="a" style="left:1px;top:377px;width:39px;height:1px;background:#b4b4b4;"></div>
<div class="a" style="left:1px;top:406px;width:39px;height:1px;background:#b4b4b4;"></div>
<div class="a" style="left:1px;top:435px;width:39px;height:1px;background:#b4b4b4;"></div>
<div class="a" style="left:1px;top:464px;width:39px;height:1px;background:#b4b4b4;"></div>
<div class="a" style="left:1px;top:493px;width:39px;height:1px;background:#b4b4b4;"></div>
<div class="a" style="left:1px;top:522px;width:39px;height:1px;background:#b4b4b4;"></div>
<div class="a" style="left:1px;top:551px;width:39px;height:1px;background:#b4b4b4;"></div>
<div class="a" style="left:1px;top:580px;width:39px;height:1px;background:#b4b4b4;"></div>
<div class="a" style="left:1px;top:609px;width:39px;height:1px;background:#b4b4b4;"></div>
<div class="a" style="left:1px;top:638px;width:39px;height:1px;background:#b4b4b4;"></div>
<div class="a" style="left:1px;top:667px;width:39px;height:1px;background:#b4b4b4;"></div>
<div class="a" style="left:1px;top:696px;width:39px;height:1px;background:#b4b4b4;"></div>
<div class="a" style="left:1px;top:725px;width:39px;height:1px;background:#b4b4b4;"></div>
<div class="a" style="left:1706px;top:319px;width:1px;height:413px;background:#9b9b9b;"></div>
<div class="a" style="left:1px;top:731px;width:1706px;height:1px;background:#9b9b9b;"></div>
<svg class="a" style="left:17px;top:296px" width="20" height="20" viewBox="0 0 20 20"><path d="M20 0V19.4H0.4Z" fill="#b8b8b8"/></svg>
<span class="a t" style="left:68.6px;top:296px;width:40px;text-align:center;font:400 19.5px/22px 'Liberation Sans',sans-serif;color:#262626">A</span>
<span class="a t" style="left:164.6px;top:296px;width:40px;text-align:center;font:400 19.5px/22px 'Liberation Sans',sans-serif;color:#262626">B</span>
<span class="a t" style="left:260.6px;top:296px;width:40px;text-align:center;font:400 19.5px/22px 'Liberation Sans',sans-serif;color:#262626">C</span>
<span class="a t" style="left:356.6px;top:296px;width:40px;text-align:center;font:400 19.5px/22px 'Liberation Sans',sans-serif;color:#262626">D</span>
<span class="a t" style="left:452.6px;top:296px;width:40px;text-align:center;font:400 19.5px/22px 'Liberation Sans',sans-serif;color:#262626">E</span>
<span class="a t" style="left:548.6px;top:296px;width:40px;text-align:center;font:400 19.5px/22px 'Liberation Sans',sans-serif;color:#262626">F</span>
<span class="a t" style="left:644.6px;top:296px;width:40px;text-align:center;font:400 19.5px/22px 'Liberation Sans',sans-serif;color:#262626">G</span>
<span class="a t" style="left:740.6px;top:296px;width:40px;text-align:center;font:400 19.5px/22px 'Liberation Sans',sans-serif;color:#262626">H</span>
<span class="a t" style="left:836.6px;top:296px;width:40px;text-align:center;font:400 19.5px/22px 'Liberation Sans',sans-serif;color:#262626">I</span>
<span class="a t" style="left:932.6px;top:296px;width:40px;text-align:center;font:400 19.5px/22px 'Liberation Sans',sans-serif;color:#262626">J</span>
<span class="a t" style="left:1028.6px;top:296px;width:40px;text-align:center;font:400 19.5px/22px 'Liberation Sans',sans-serif;color:#262626">K</span>
<span class="a t" style="left:1124.6px;top:296px;width:40px;text-align:center;font:400 19.5px/22px 'Liberation Sans',sans-serif;color:#262626">L</span>
<span class="a t" style="left:1220.6px;top:296px;width:40px;text-align:center;font:400 19.5px/22px 'Liberation Sans',sans-serif;color:#262626">M</span>
<span class="a t" style="left:1316.6px;top:296px;width:40px;text-align:center;font:400 19.5px/22px 'Liberation Sans',sans-serif;color:#262626">N</span>
<span class="a t" style="left:1412.6px;top:296px;width:40px;text-align:center;font:400 19.5px/22px 'Liberation Sans',sans-serif;color:#262626">O</span>
<span class="a t" style="left:1508.6px;top:296px;width:40px;text-align:center;font:400 19.5px/22px 'Liberation Sans',sans-serif;color:#262626">P</span>
<span class="a t" style="left:1604.6px;top:296px;width:40px;text-align:center;font:400 19.5px/22px 'Liberation Sans',sans-serif;color:#262626">Q</span>
<span class="a t" style="left:1px;top:324px;width:39px;text-align:center;font:400 19.5px/22px 'Liberation Sans',sans-serif;color:#262626">1</span>
<span class="a t" style="left:1px;top:353px;width:39px;text-align:center;font:400 19.5px/22px 'Liberation Sans',sans-serif;color:#262626">2</span>
<span class="a t" style="left:1px;top:382px;width:39px;text-align:center;font:400 19.5px/22px 'Liberation Sans',sans-serif;color:#262626">3</span>
<span class="a t" style="left:1px;top:411px;width:39px;text-align:center;font:400 19.5px/22px 'Liberation Sans',sans-serif;color:#262626">4</span>
<span class="a t" style="left:1px;top:440px;width:39px;text-align:center;font:400 19.5px/22px 'Liberation Sans',sans-serif;color:#262626">5</span>
<span class="a t" style="left:1px;top:469px;width:39px;text-align:center;font:400 19.5px/22px 'Liberation Sans',sans-serif;color:#262626">6</span>
<span class="a t" style="left:1px;top:498px;width:39px;text-align:center;font:400 19.5px/22px 'Liberation Sans',sans-serif;color:#262626">7</span>
<span class="a t" style="left:1px;top:527px;width:39px;text-align:center;font:400 19.5px/22px 'Liberation Sans',sans-serif;color:#262626">8</span>
<span class="a t" style="left:1px;top:556px;width:39px;text-align:center;font:400 19.5px/22px 'Liberation Sans',sans-serif;color:#262626">9</span>
<span class="a t" style="left:1px;top:585px;width:39px;text-align:center;letter-spacing:0.2px;padding-left:1.2px;font:400 19.5px/22px 'Liberation Sans',sans-serif;color:#262626">10</span>
<span class="a t" style="left:1px;top:614px;width:39px;text-align:center;letter-spacing:0.2px;padding-left:1.2px;font:400 19.5px/22px 'Liberation Sans',sans-serif;color:#262626">11</span>
<span class="a t" style="left:1px;top:643px;width:39px;text-align:center;letter-spacing:0.2px;padding-left:1.2px;font:400 19.5px/22px 'Liberation Sans',sans-serif;color:#262626">12</span>
<span class="a t" style="left:1px;top:672px;width:39px;text-align:center;letter-spacing:0.2px;padding-left:1.2px;font:400 19.5px/22px 'Liberation Sans',sans-serif;color:#262626">13</span>
<span class="a t" style="left:1px;top:701px;width:39px;text-align:center;letter-spacing:0.2px;padding-left:1.2px;font:400 19.5px/22px 'Liberation Sans',sans-serif;color:#262626">14</span>
<div class="c" style="left:41px;top:319px;width:95px;height:27px;box-sizing:border-box;padding-left:2.8px;font:400 19.3px/25px 'Liberation Sans',sans-serif;padding-top:4px;color:#000;letter-spacing:0.905px">first_name</div>
<div class="c" style="left:137px;top:319px;width:95px;height:27px;box-sizing:border-box;padding-left:2.8px;font:400 19.3px/25px 'Liberation Sans',sans-serif;padding-top:4px;color:#000;letter-spacing:0.708px">last_name</div>
<div class="c" style="left:233px;top:319px;width:95px;height:27px;box-sizing:border-box;padding-left:2.8px;font:400 19.3px/25px 'Liberation Sans',sans-serif;padding-top:4px;color:#000;letter-spacing:0.768px">email</div>
<div class="c" style="left:329px;top:319px;width:95px;height:27px;box-sizing:border-box;padding-left:2.8px;font:400 19.3px/25px 'Liberation Sans',sans-serif;padding-top:4px;color:#000;letter-spacing:1.118px">phone_number</div>
<div class="c" style="left:425px;top:319px;width:95px;height:27px;box-sizing:border-box;padding-left:2.8px;font:400 19.3px/25px 'Liberation Sans',sans-serif;padding-top:4px;color:#000;letter-spacing:0.995px">date_of_birth</div>
<div class="c" style="left:521px;top:319px;width:95px;height:27px;box-sizing:border-box;padding-left:2.8px;font:400 19.3px/25px 'Liberation Sans',sans-serif;padding-top:4px;color:#000;letter-spacing:0.931px">title</div>
<div class="c" style="left:617px;top:319px;width:95px;height:27px;box-sizing:border-box;padding-left:2.8px;font:400 19.3px/25px 'Liberation Sans',sans-serif;padding-top:4px;color:#000;letter-spacing:0.933px">team_name</div>
<div class="c" style="left:713px;top:319px;width:95px;height:27px;box-sizing:border-box;padding-left:2.8px;font:400 19.3px/25px 'Liberation Sans',sans-serif;padding-top:4px;color:#000;letter-spacing:0.900px">employment_status</div>
<div class="c" style="left:809px;top:319px;width:95px;height:27px;box-sizing:border-box;padding-left:2.8px;font:400 19.3px/25px 'Liberation Sans',sans-serif;padding-top:4px;color:#000;letter-spacing:0.993px">employment_start</div>
<div class="c" style="left:905px;top:319px;width:95px;height:27px;box-sizing:border-box;padding-left:2.8px;font:400 19.3px/25px 'Liberation Sans',sans-serif;padding-top:4px;color:#000;letter-spacing:1.013px">employment_end</div>
<div class="c" style="left:1001px;top:319px;width:95px;height:27px;box-sizing:border-box;padding-left:2.8px;font:400 19.3px/25px 'Liberation Sans',sans-serif;padding-top:4px;color:#000;letter-spacing:0.850px">offer_status</div>
<div class="c" style="left:1097px;top:319px;width:95px;height:27px;box-sizing:border-box;padding-left:2.8px;font:400 19.3px/25px 'Liberation Sans',sans-serif;padding-top:4px;color:#000;letter-spacing:0.982px">offer_start</div>
<div class="c" style="left:1193px;top:319px;width:95px;height:27px;box-sizing:border-box;padding-left:2.8px;font:400 19.3px/25px 'Liberation Sans',sans-serif;padding-top:4px;color:#000;letter-spacing:0.696px">offer_close</div>
<div class="c" style="left:1289px;top:319px;width:95px;height:27px;box-sizing:border-box;padding-left:2.8px;font:400 19.3px/25px 'Liberation Sans',sans-serif;padding-top:4px;color:#000;letter-spacing:0.720px">home_address_1</div>
<div class="c" style="left:1385px;top:319px;width:95px;height:27px;box-sizing:border-box;padding-left:2.8px;font:400 19.3px/25px 'Liberation Sans',sans-serif;padding-top:4px;color:#000;letter-spacing:0.720px">home_address_2</div>
<div class="c" style="left:1481px;top:319px;width:95px;height:27px;box-sizing:border-box;padding-left:2.8px;font:400 19.3px/25px 'Liberation Sans',sans-serif;padding-top:4px;color:#000;letter-spacing:0.696px">home_address_city</div>
<div class="c" style="left:1577px;top:319px;width:95px;height:27px;box-sizing:border-box;padding-left:2.8px;font:400 19.3px/25px 'Liberation Sans',sans-serif;padding-top:4px;color:#000;letter-spacing:0.712px">home_address_state</div>
<div class="c" style="left:1673px;top:319px;width:33px;height:27px;box-sizing:border-box;padding-left:2.8px;font:400 19.3px/25px 'Liberation Sans',sans-serif;padding-top:4px;color:#000;letter-spacing:0.818px">home_address_country</div>
<div class="c" style="left:41px;top:348px;width:95px;height:27px;box-sizing:border-box;padding-left:2.8px;font:400 19.3px/25px 'Liberation Sans',sans-serif;padding-top:4px;color:#000;letter-spacing:0.384px">Sample</div>
<div class="c" style="left:137px;top:348px;width:95px;height:27px;box-sizing:border-box;padding-left:2.8px;font:400 19.3px/25px 'Liberation Sans',sans-serif;padding-top:4px;color:#000;letter-spacing:0.326px">User 1</div>
<div class="c" style="left:233px;top:348px;width:95px;height:27px;box-sizing:border-box;padding-left:2.8px;font:400 19.3px/25px 'Liberation Sans',sans-serif;padding-top:4px;color:#000;letter-spacing:0.582px">sampleuser1@example.com</div>
<div class="c" style="left:329px;top:348px;width:95px;height:27px;box-sizing:border-box;text-align:right;padding-right:3.19px;font:400 19.3px/25px 'Liberation Sans',sans-serif;padding-top:4px;color:#000;letter-spacing:-0.008px"><span style="margin-right:0.008px">9.09E+09</span></div>
<div class="c" style="left:425px;top:348px;width:95px;height:27px;box-sizing:border-box;padding-left:2.8px;font:400 19.3px/25px 'Liberation Sans',sans-serif;padding-top:4px;color:#000;letter-spacing:0.773px">mm-dd-yyyy</div>
<div class="c" style="left:521px;top:348px;width:95px;height:27px;box-sizing:border-box;padding-left:2.8px;font:400 19.3px/25px 'Liberation Sans',sans-serif;padding-top:4px;color:#000;letter-spacing:0.590px">Software Developer</div>
<div class="c" style="left:617px;top:348px;width:95px;height:27px;box-sizing:border-box;padding-left:2.8px;font:400 19.3px/25px 'Liberation Sans',sans-serif;padding-top:4px;color:#000;letter-spacing:0.802px">Innovators</div>
<div class="c" style="left:713px;top:348px;width:95px;height:27px;box-sizing:border-box;padding-left:2.8px;font:400 19.3px/25px 'Liberation Sans',sans-serif;padding-top:4px;color:#000;letter-spacing:0.316px">Active</div>
<div class="c" style="left:809px;top:348px;width:95px;height:27px;box-sizing:border-box;padding-left:2.8px;font:400 19.3px/25px 'Liberation Sans',sans-serif;padding-top:4px;color:#000;letter-spacing:0.773px">mm-dd-yyyy</div>
<div class="c" style="left:905px;top:348px;width:95px;height:27px;box-sizing:border-box;padding-left:2.8px;font:400 19.3px/25px 'Liberation Sans',sans-serif;padding-top:4px;color:#000;letter-spacing:0.773px">mm-dd-yyyy</div>
<div class="c" style="left:1001px;top:348px;width:95px;height:27px;box-sizing:border-box;padding-left:2.8px;font:400 19.3px/25px 'Liberation Sans',sans-serif;padding-top:4px;color:#000;letter-spacing:0.805px">Approved</div>
<div class="c" style="left:1097px;top:348px;width:95px;height:27px;box-sizing:border-box;padding-left:2.8px;font:400 19.3px/25px 'Liberation Sans',sans-serif;padding-top:4px;color:#000;letter-spacing:0.773px">mm-dd-yyyy</div>
<div class="c" style="left:1193px;top:348px;width:95px;height:27px;box-sizing:border-box;padding-left:2.8px;font:400 19.3px/25px 'Liberation Sans',sans-serif;padding-top:4px;color:#000;letter-spacing:0.773px">mm-dd-yyyy</div>
<div class="c" style="left:1289px;top:348px;width:95px;height:27px;box-sizing:border-box;padding-left:2.8px;font:400 19.3px/25px 'Liberation Sans',sans-serif;padding-top:4px;color:#000;letter-spacing:0.398px">Apt. 101</div>
<div class="c" style="left:1385px;top:348px;width:95px;height:27px;box-sizing:border-box;padding-left:2.8px;font:400 19.3px/25px 'Liberation Sans',sans-serif;padding-top:4px;color:#000;letter-spacing:0.227px">Oak Lane</div>
<div class="c" style="left:1481px;top:348px;width:95px;height:27px;box-sizing:border-box;padding-left:2.8px;font:400 19.3px/25px 'Liberation Sans',sans-serif;padding-top:4px;color:#000;letter-spacing:1.026px">Auburn</div>
<div class="c" style="left:1577px;top:348px;width:95px;height:27px;box-sizing:border-box;padding-left:2.8px;font:400 19.3px/25px 'Liberation Sans',sans-serif;padding-top:4px;color:#000;letter-spacing:0.572px">Alabama</div>
<div class="c" style="left:1673px;top:348px;width:33px;height:27px;box-sizing:border-box;padding-left:2.8px;font:400 19.3px/25px 'Liberation Sans',sans-serif;padding-top:4px;color:#000;letter-spacing:0.466px">United States</div>
<div class="c" style="left:41px;top:377px;width:95px;height:27px;box-sizing:border-box;padding-left:2.8px;font:400 19.3px/25px 'Liberation Sans',sans-serif;padding-top:4px;color:#000;letter-spacing:0.384px">Sample</div>
<div class="c" style="left:137px;top:377px;width:95px;height:27px;box-sizing:border-box;padding-left:2.8px;font:400 19.3px/25px 'Liberation Sans',sans-serif;padding-top:4px;color:#000;letter-spacing:0.326px">User 2</div>
<div class="c" style="left:233px;top:377px;width:95px;height:27px;box-sizing:border-box;padding-left:2.8px;font:400 19.3px/25px 'Liberation Sans',sans-serif;padding-top:4px;color:#000;letter-spacing:0.582px">sampleuser2@example.com</div>
<div class="c" style="left:329px;top:377px;width:95px;height:27px;box-sizing:border-box;text-align:right;padding-right:3.19px;font:400 19.3px/25px 'Liberation Sans',sans-serif;padding-top:4px;color:#000;letter-spacing:-0.008px"><span style="margin-right:0.008px">8.12E+09</span></div>
<div class="c" style="left:425px;top:377px;width:95px;height:27px;box-sizing:border-box;padding-left:2.8px;font:400 19.3px/25px 'Liberation Sans',sans-serif;padding-top:4px;color:#000;letter-spacing:0.773px">mm-dd-yyyy</div>
<div class="c" style="left:521px;top:377px;width:95px;height:27px;box-sizing:border-box;padding-left:2.8px;font:400 19.3px/25px 'Liberation Sans',sans-serif;padding-top:4px;color:#000;letter-spacing:0.381px">IT Manager</div>
<div class="c" style="left:617px;top:377px;width:95px;height:27px;box-sizing:border-box;padding-left:2.8px;font:400 19.3px/25px 'Liberation Sans',sans-serif;padding-top:4px;color:#000;letter-spacing:0.469px">Tech Titans</div>
<div class="c" style="left:713px;top:377px;width:95px;height:27px;box-sizing:border-box;padding-left:2.8px;font:400 19.3px/25px 'Liberation Sans',sans-serif;padding-top:4px;color:#000;letter-spacing:0.316px">Active</div>
<div class="c" style="left:809px;top:377px;width:95px;height:27px;box-sizing:border-box;padding-left:2.8px;font:400 19.3px/25px 'Liberation Sans',sans-serif;padding-top:4px;color:#000;letter-spacing:0.773px">mm-dd-yyyy</div>
<div class="c" style="left:905px;top:377px;width:95px;height:27px;box-sizing:border-box;padding-left:2.8px;font:400 19.3px/25px 'Liberation Sans',sans-serif;padding-top:4px;color:#000;letter-spacing:0.773px">mm-dd-yyyy</div>
<div class="c" style="left:1001px;top:377px;width:95px;height:27px;box-sizing:border-box;padding-left:2.8px;font:400 19.3px/25px 'Liberation Sans',sans-serif;padding-top:4px;color:#000;letter-spacing:0.805px">Approved</div>
<div class="c" style="left:1097px;top:377px;width:95px;height:27px;box-sizing:border-box;padding-left:2.8px;font:400 19.3px/25px 'Liberation Sans',sans-serif;padding-top:4px;color:#000;letter-spacing:0.773px">mm-dd-yyyy</div>
<div class="c" style="left:1193px;top:377px;width:95px;height:27px;box-sizing:border-box;padding-left:2.8px;font:400 19.3px/25px 'Liberation Sans',sans-serif;padding-top:4px;color:#000;letter-spacing:0.773px">mm-dd-yyyy</div>
<div class="c" style="left:1289px;top:377px;width:95px;height:27px;box-sizing:border-box;padding-left:2.8px;font:400 19.3px/25px 'Liberation Sans',sans-serif;padding-top:4px;color:#000;letter-spacing:0.292px">Suite 202</div>
<div class="c" style="left:1385px;top:377px;width:95px;height:27px;box-sizing:border-box;padding-left:2.8px;font:400 19.3px/25px 'Liberation Sans',sans-serif;padding-top:4px;color:#000;letter-spacing:0.608px">Maple Drive</div>
<div class="c" style="left:1481px;top:377px;width:95px;height:27px;box-sizing:border-box;padding-left:2.8px;font:400 19.3px/25px 'Liberation Sans',sans-serif;padding-top:4px;color:#000;letter-spacing:0.139px">Los Angeles</div>
<div class="c" style="left:1577px;top:377px;width:95px;height:27px;box-sizing:border-box;padding-left:2.8px;font:400 19.3px/25px 'Liberation Sans',sans-serif;padding-top:4px;color:#000;letter-spacing:0.588px">California</div>
<div class="c" style="left:1673px;top:377px;width:33px;height:27px;box-sizing:border-box;padding-left:2.8px;font:400 19.3px/25px 'Liberation Sans',sans-serif;padding-top:4px;color:#000;letter-spacing:0.466px">United States</div>
<div class="c" style="left:41px;top:406px;width:95px;height:27px;box-sizing:border-box;padding-left:2.8px;font:400 19.3px/25px 'Liberation Sans',sans-serif;padding-top:4px;color:#000;letter-spacing:0.384px">Sample</div>
<div class="c" style="left:137px;top:406px;width:95px;height:27px;box-sizing:border-box;padding-left:2.8px;font:400 19.3px/25px 'Liberation Sans',sans-serif;padding-top:4px;color:#000;letter-spacing:0.326px">User 3</div>
<div class="c" style="left:233px;top:406px;width:95px;height:27px;box-sizing:border-box;padding-left:2.8px;font:400 19.3px/25px 'Liberation Sans',sans-serif;padding-top:4px;color:#000;letter-spacing:0.582px">sampleuser3@example.com</div>
<div class="c" style="left:329px;top:406px;width:95px;height:27px;box-sizing:border-box;text-align:right;padding-right:3.19px;font:400 19.3px/25px 'Liberation Sans',sans-serif;padding-top:4px;color:#000;letter-spacing:-0.008px"><span style="margin-right:0.008px">5.55E+09</span></div>
<div class="c" style="left:425px;top:406px;width:95px;height:27px;box-sizing:border-box;padding-left:2.8px;font:400 19.3px/25px 'Liberation Sans',sans-serif;padding-top:4px;color:#000;letter-spacing:0.773px">mm-dd-yyyy</div>
<div class="c" style="left:521px;top:406px;width:95px;height:27px;box-sizing:border-box;padding-left:2.8px;font:400 19.3px/25px 'Liberation Sans',sans-serif;padding-top:4px;color:#000;letter-spacing:0.470px">Software Engineer</div>
<div class="c" style="left:617px;top:406px;width:95px;height:27px;box-sizing:border-box;padding-left:2.8px;font:400 19.3px/25px 'Liberation Sans',sans-serif;padding-top:4px;color:#000;letter-spacing:0.627px">Alpha Team</div>
<div class="c" style="left:713px;top:406px;width:95px;height:27px;box-sizing:border-box;padding-left:2.8px;font:400 19.3px/25px 'Liberation Sans',sans-serif;padding-top:4px;color:#000;letter-spacing:0.316px">Active</div>
<div class="c" style="left:809px;top:406px;width:95px;height:27px;box-sizing:border-box;padding-left:2.8px;font:400 19.3px/25px 'Liberation Sans',sans-serif;padding-top:4px;color:#000;letter-spacing:0.773px">mm-dd-yyyy</div>
<div class="c" style="left:905px;top:406px;width:95px;height:27px;box-sizing:border-box;padding-left:2.8px;font:400 19.3px/25px 'Liberation Sans',sans-serif;padding-top:4px;color:#000;letter-spacing:0.773px">mm-dd-yyyy</div>
<div class="c" style="left:1001px;top:406px;width:95px;height:27px;box-sizing:border-box;padding-left:2.8px;font:400 19.3px/25px 'Liberation Sans',sans-serif;padding-top:4px;color:#000;letter-spacing:0.805px">Approved</div>
<div class="c" style="left:1097px;top:406px;width:95px;height:27px;box-sizing:border-box;padding-left:2.8px;font:400 19.3px/25px 'Liberation Sans',sans-serif;padding-top:4px;color:#000;letter-spacing:0.773px">mm-dd-yyyy</div>
<div class="c" style="left:1193px;top:406px;width:95px;height:27px;box-sizing:border-box;padding-left:2.8px;font:400 19.3px/25px 'Liberation Sans',sans-serif;padding-top:4px;color:#000;letter-spacing:0.773px">mm-dd-yyyy</div>
<div class="c" style="left:1289px;top:406px;width:95px;height:27px;box-sizing:border-box;padding-left:2.8px;font:400 19.3px/25px 'Liberation Sans',sans-serif;padding-top:4px;color:#000;letter-spacing:0.349px">123 Main St</div>
<div class="c" style="left:1385px;top:406px;width:95px;height:27px;box-sizing:border-box;padding-left:2.8px;font:400 19.3px/25px 'Liberation Sans',sans-serif;padding-top:4px;color:#000;letter-spacing:0.453px">Business District</div>
<div class="c" style="left:1481px;top:406px;width:95px;height:27px;box-sizing:border-box;padding-left:2.8px;font:400 19.3px/25px 'Liberation Sans',sans-serif;padding-top:4px;color:#000;letter-spacing:0.649px">New York</div>
<div class="c" style="left:1577px;top:406px;width:95px;height:27px;box-sizing:border-box;padding-left:2.8px;font:400 19.3px/25px 'Liberation Sans',sans-serif;padding-top:4px;color:#000;letter-spacing:0.649px">New York</div>
<div class="c" style="left:1673px;top:406px;width:33px;height:27px;box-sizing:border-box;padding-left:2.8px;font:400 19.3px/25px 'Liberation Sans',sans-serif;padding-top:4px;color:#000;letter-spacing:0.466px">United States</div>
<div class="c" style="left:41px;top:435px;width:95px;height:27px;box-sizing:border-box;padding-left:2.8px;font:400 19.3px/25px 'Liberation Sans',sans-serif;padding-top:4px;color:#000;letter-spacing:0.384px">Sample</div>
<div class="c" style="left:137px;top:435px;width:95px;height:27px;box-sizing:border-box;padding-left:2.8px;font:400 19.3px/25px 'Liberation Sans',sans-serif;padding-top:4px;color:#000;letter-spacing:0.326px">User 4</div>
<div class="c" style="left:233px;top:435px;width:95px;height:27px;box-sizing:border-box;padding-left:2.8px;font:400 19.3px/25px 'Liberation Sans',sans-serif;padding-top:4px;color:#000;letter-spacing:0.582px">sampleuser4@example.com</div>
<div class="c" style="left:329px;top:435px;width:95px;height:27px;box-sizing:border-box;text-align:right;padding-right:3.19px;font:400 19.3px/25px 'Liberation Sans',sans-serif;padding-top:4px;color:#000;letter-spacing:-0.008px"><span style="margin-right:0.008px">5.56E+09</span></div>
<div class="c" style="left:425px;top:435px;width:95px;height:27px;box-sizing:border-box;padding-left:2.8px;font:400 19.3px/25px 'Liberation Sans',sans-serif;padding-top:4px;color:#000;letter-spacing:0.773px">mm-dd-yyyy</div>
<div class="c" style="left:521px;top:435px;width:95px;height:27px;box-sizing:border-box;padding-left:2.8px;font:400 19.3px/25px 'Liberation Sans',sans-serif;padding-top:4px;color:#000;letter-spacing:0.665px">Product Manager</div>
<div class="c" style="left:617px;top:435px;width:95px;height:27px;box-sizing:border-box;padding-left:2.8px;font:400 19.3px/25px 'Liberation Sans',sans-serif;padding-top:4px;color:#000;letter-spacing:0.573px">Beta Team</div>
<div class="c" style="left:713px;top:435px;width:95px;height:27px;box-sizing:border-box;padding-left:2.8px;font:400 19.3px/25px 'Liberation Sans',sans-serif;padding-top:4px;color:#000;letter-spacing:0.488px">Inactive</div>
<div class="c" style="left:809px;top:435px;width:95px;height:27px;box-sizing:border-box;padding-left:2.8px;font:400 19.3px/25px 'Liberation Sans',sans-serif;padding-top:4px;color:#000;letter-spacing:0.773px">mm-dd-yyyy</div>
<div class="c" style="left:905px;top:435px;width:95px;height:27px;box-sizing:border-box;padding-left:2.8px;font:400 19.3px/25px 'Liberation Sans',sans-serif;padding-top:4px;color:#000;letter-spacing:0.773px">mm-dd-yyyy</div>
<div class="c" style="left:1001px;top:435px;width:95px;height:27px;box-sizing:border-box;padding-left:2.8px;font:400 19.3px/25px 'Liberation Sans',sans-serif;padding-top:4px;color:#000;letter-spacing:0.805px">Approved</div>
<div class="c" style="left:1097px;top:435px;width:95px;height:27px;box-sizing:border-box;padding-left:2.8px;font:400 19.3px/25px 'Liberation Sans',sans-serif;padding-top:4px;color:#000;letter-spacing:0.773px">mm-dd-yyyy</div>
<div class="c" style="left:1193px;top:435px;width:95px;height:27px;box-sizing:border-box;padding-left:2.8px;font:400 19.3px/25px 'Liberation Sans',sans-serif;padding-top:4px;color:#000;letter-spacing:0.773px">mm-dd-yyyy</div>
<div class="c" style="left:1289px;top:435px;width:95px;height:27px;box-sizing:border-box;padding-left:2.8px;font:400 19.3px/25px 'Liberation Sans',sans-serif;padding-top:4px;color:#000;letter-spacing:0.364px">789 Oak Dr</div>
<div class="c" style="left:1385px;top:435px;width:95px;height:27px;box-sizing:border-box;padding-left:2.8px;font:400 19.3px/25px 'Liberation Sans',sans-serif;padding-top:4px;color:#000;letter-spacing:0.379px">Apt 3B</div>
<div class="c" style="left:1481px;top:435px;width:95px;height:27px;box-sizing:border-box;padding-left:2.8px;font:400 19.3px/25px 'Liberation Sans',sans-serif;padding-top:4px;color:#000;letter-spacing:0.083px">San Francisco</div>
<div class="c" style="left:1577px;top:435px;width:95px;height:27px;box-sizing:border-box;padding-left:2.8px;font:400 19.3px/25px 'Liberation Sans',sans-serif;padding-top:4px;color:#000;letter-spacing:0.588px">California</div>
<div class="c" style="left:1673px;top:435px;width:33px;height:27px;box-sizing:border-box;padding-left:2.8px;font:400 19.3px/25px 'Liberation Sans',sans-serif;padding-top:4px;color:#000;letter-spacing:0.466px">United States</div>
<div class="c" style="left:41px;top:464px;width:95px;height:27px;box-sizing:border-box;padding-left:2.8px;font:400 19.3px/25px 'Liberation Sans',sans-serif;padding-top:4px;color:#000;letter-spacing:0.384px">Sample</div>
<div class="c" style="left:137px;top:464px;width:95px;height:27px;box-sizing:border-box;padding-left:2.8px;font:400 19.3px/25px 'Liberation Sans',sans-serif;padding-top:4px;color:#000;letter-spacing:0.326px">User 5</div>
<div class="c" style="left:233px;top:464px;width:95px;height:27px;box-sizing:border-box;padding-left:2.8px;font:400 19.3px/25px 'Liberation Sans',sans-serif;padding-top:4px;color:#000;letter-spacing:0.582px">sampleuser5@example.com</div>
<div class="c" style="left:329px;top:464px;width:95px;height:27px;box-sizing:border-box;text-align:right;padding-right:3.19px;font:400 19.3px/25px 'Liberation Sans',sans-serif;padding-top:4px;color:#000;letter-spacing:-0.008px"><span style="margin-right:0.008px">5.56E+09</span></div>
<div class="c" style="left:425px;top:464px;width:95px;height:27px;box-sizing:border-box;padding-left:2.8px;font:400 19.3px/25px 'Liberation Sans',sans-serif;padding-top:4px;color:#000;letter-spacing:0.773px">mm-dd-yyyy</div>
<div class="c" style="left:521px;top:464px;width:95px;height:27px;box-sizing:border-box;padding-left:2.8px;font:400 19.3px/25px 'Liberation Sans',sans-serif;padding-top:4px;color:#000;letter-spacing:0.419px">Data Analyst</div>
<div class="c" style="left:617px;top:464px;width:95px;height:27px;box-sizing:border-box;padding-left:2.8px;font:400 19.3px/25px 'Liberation Sans',sans-serif;padding-top:4px;color:#000;letter-spacing:0.720px">Gamma Team</div>
<div class="c" style="left:713px;top:464px;width:95px;height:27px;box-sizing:border-box;padding-left:2.8px;font:400 19.3px/25px 'Liberation Sans',sans-serif;padding-top:4px;color:#000;letter-spacing:0.316px">Active</div>
<div class="c" style="left:809px;top:464px;width:95px;height:27px;box-sizing:border-box;padding-left:2.8px;font:400 19.3px/25px 'Liberation Sans',sans-serif;padding-top:4px;color:#000;letter-spacing:0.773px">mm-dd-yyyy</div>
<div class="c" style="left:905px;top:464px;width:95px;height:27px;box-sizing:border-box;padding-left:2.8px;font:400 19.3px/25px 'Liberation Sans',sans-serif;padding-top:4px;color:#000;letter-spacing:0.773px">mm-dd-yyyy</div>
<div class="c" style="left:1001px;top:464px;width:95px;height:27px;box-sizing:border-box;padding-left:2.8px;font:400 19.3px/25px 'Liberation Sans',sans-serif;padding-top:4px;color:#000;letter-spacing:0.805px">Approved</div>
<div class="c" style="left:1097px;top:464px;width:95px;height:27px;box-sizing:border-box;padding-left:2.8px;font:400 19.3px/25px 'Liberation Sans',sans-serif;padding-top:4px;color:#000;letter-spacing:0.773px">mm-dd-yyyy</div>
<div class="c" style="left:1193px;top:464px;width:95px;height:27px;box-sizing:border-box;padding-left:2.8px;font:400 19.3px/25px 'Liberation Sans',sans-serif;padding-top:4px;color:#000;letter-spacing:0.773px">mm-dd-yyyy</div>
<div class="c" style="left:1289px;top:464px;width:95px;height:27px;box-sizing:border-box;padding-left:2.8px;font:400 19.3px/25px 'Liberation Sans',sans-serif;padding-top:4px;color:#000;letter-spacing:0.115px">456 Pine Rd</div>
<div class="c" style="left:1385px;top:464px;width:95px;height:27px;box-sizing:border-box;padding-left:2.8px;font:400 19.3px/25px 'Liberation Sans',sans-serif;padding-top:4px;color:#000;letter-spacing:0.859px">Bloomberg Tower</div>
<div class="c" style="left:1481px;top:464px;width:95px;height:27px;box-sizing:border-box;padding-left:2.8px;font:400 19.3px/25px 'Liberation Sans',sans-serif;padding-top:4px;color:#000;letter-spacing:0.176px">Chicago</div>
<div class="c" style="left:1577px;top:464px;width:95px;height:27px;box-sizing:border-box;padding-left:2.8px;font:400 19.3px/25px 'Liberation Sans',sans-serif;padding-top:4px;color:#000;letter-spacing:0.598px">Illinois</div>
<div class="c" style="left:1673px;top:464px;width:33px;height:27px;box-sizing:border-box;padding-left:2.8px;font:400 19.3px/25px 'Liberation Sans',sans-serif;padding-top:4px;color:#000;letter-spacing:0.466px">United States</div>
<div class="a" style="left:1709px;top:292px;width:25px;height:440px;background:#f3f3f3;"></div>
<div class="a" style="left:1709px;top:292px;width:25px;height:25px;background:#fff;border:1px solid #919191;box-sizing:border-box;"></div>
<svg class="a" style="left:1715px;top:300px" width="13" height="8" viewBox="0 0 13 8"><path d="M1 6.8L6.5 1L12 6.8Z" fill="#262626"/></svg>
<div class="a" style="left:1709px;top:317px;width:25px;height:273px;background:#fff;border:1px solid #919191;box-sizing:border-box;"></div>
<div class="a" style="left:1709px;top:708px;width:25px;height:25px;background:#fff;border:1px solid #919191;box-sizing:border-box;"></div>
<svg class="a" style="left:1715px;top:717px" width="13" height="8" viewBox="0 0 13 8"><path d="M1 1L6.5 6.8L12 1Z" fill="#262626"/></svg>
<svg class="a" style="left:32px;top:744px" width="8" height="13" viewBox="0 0 8 13"><path d="M7 0.8V12.2L0.8 6.5Z" fill="#c3c3c3"/></svg>
<svg class="a" style="left:72px;top:744px" width="8" height="13" viewBox="0 0 8 13"><path d="M1 0.8V12.2L7.2 6.5Z" fill="#c3c3c3"/></svg>
<div class="a" style="left:134px;top:731px;width:109px;height:35px;background:#fff;"></div>
<div class="a" style="left:134px;top:731px;width:1px;height:35px;background:#9b9b9b;"></div>
<div class="a" style="left:242px;top:731px;width:1px;height:35px;background:#9b9b9b;"></div>
<div class="a" style="left:134px;top:765px;width:109px;height:2px;background:#217346;"></div>
<span class="a t" style="left:146.60px;top:740px;font:normal 700 19.4px/22px 'Liberation Sans',sans-serif;color:#217346;letter-spacing:0.729px;">template</span>
<svg class="a" style="left:289px;top:739px" width="24" height="24" viewBox="0 0 24 24"><circle cx="12" cy="12" r="10.2" fill="none" stroke="#8a8a8a" stroke-width="1.5"/><path d="M12 6.6V17.4M6.6 12H17.4" stroke="#777" stroke-width="1.6"/></svg>
<div class="a" style="left:1041px;top:744px;width:3px;height:3px;background:#a9a9a9;"></div>
<div class="a" style="left:1041px;top:750px;width:3px;height:3px;background:#a9a9a9;"></div>
<div class="a" style="left:1041px;top:756px;width:3px;height:3px;background:#a9a9a9;"></div>
<div class="a" style="left:1064px;top:738px;width:644px;height:25px;background:#f3f3f3;"></div>
<div class="a" style="left:1064px;top:738px;width:25px;height:25px;background:#fff;border:1px solid #919191;box-sizing:border-box;"></div>
<svg class="a" style="left:1072px;top:744px" width="8" height="13" viewBox="0 0 8 13"><path d="M7 0.6V12.4L0.8 6.5Z" fill="#262626"/></svg>
<div class="a" style="left:1088px;top:738px;width:389px;height:25px;background:#fff;border:1px solid #919191;box-sizing:border-box;"></div>
<div class="a" style="left:1683px;top:738px;width:25px;height:25px;background:#fff;border:1px solid #919191;box-sizing:border-box;"></div>
<svg class="a" style="left:1692px;top:744px" width="8" height="13" viewBox="0 0 8 13"><path d="M1 0.6V12.4L7.2 6.5Z" fill="#262626"/></svg>
<svg class="a" style="left:24px;top:96px" width="48" height="50" viewBox="24 96 48 50"><rect x="27.1" y="104" width="32.5" height="36.8" rx="1.6" fill="#d7d6d7"/><path d="M32.4 109.5V104.6H38.8V100.6a1.4 1.4 0 0 1 1.4-1.4h6.4a1.4 1.4 0 0 1 1.4 1.4V104.6H54.5V109.5Z" fill="#f3f3f3"/><path d="M33 108.9V104.4H39.3V100.8a1.2 1.2 0 0 1 1.2-1.2h6a1.2 1.2 0 0 1 1.2 1.2V104.4H54V108.9Z" fill="#b7b7b7"/><circle cx="43.4" cy="102.3" r="1.45" fill="#f1f1f1"/><path d="M47.5 116.6H61.4L67.6 122.8V143.3H47.5Z" fill="#f6f5f6" stroke="#b9b9b9" stroke-width="1.1"/><path d="M61.4 116.6V122.8H67.6" fill="none" stroke="#b9b9b9" stroke-width="1.1"/></svg>
<svg class="a" style="left:76px;top:96px" width="30" height="96" viewBox="76 96 30 96"><path d="M83.7 98.2H86.7L92.2 109.2L94.8 113.2L93.2 114L89.4 110Z" fill="#6a6a6a"/><path d="M96.5 98.2H93.5L88 109.2L85.4 113.2L87 114L90.8 110Z" fill="#6a6a6a"/><circle cx="84.5" cy="115.8" r="3.1" fill="none" stroke="#3f7fc1" stroke-width="1.4"/><circle cx="95.7" cy="115.8" r="3.1" fill="none" stroke="#3f7fc1" stroke-width="1.4"/><path d="M81.5 133.5H88L91.5 137V147.5H81.5Z" fill="#fff" stroke="#777" stroke-width="1"/><path d="M88 133.5V137H91.5" fill="none" stroke="#777" stroke-width="1"/><path d="M83.4 138.5H87.4M83.4 141.2H89.6M83.4 143.9H89.6" stroke="#3f7fc1" stroke-width="1"/><path d="M90.6 140H97.2L100.6 143.4V154.5H90.6Z" fill="#fff" stroke="#777" stroke-width="1"/><path d="M97.2 140V143.4H100.6" fill="none" stroke="#777" stroke-width="1"/><path d="M92.6 145.4H96.6M92.6 148.1H98.6M92.6 150.8H98.6" stroke="#3f7fc1" stroke-width="1"/><path d="M95.2 173.4L101.4 169.4" stroke="#6a6a6a" stroke-width="3.4" stroke-linecap="round"/><path d="M88.3 174L91.8 171.7L97.8 178.6L94.4 182Z" fill="#666" stroke="#666" stroke-width="0.8" stroke-linejoin="round"/><path d="M79.2 178.6L87.4 176.2L94 183L88.3 188.8Z" fill="#eaa878"/></svg>
<svg class="a" style="left:916px;top:95px" width="28" height="27" viewBox="916 95 28 27"><rect x="918.5" y="97.6" width="20" height="18.8" fill="#fff" stroke="#777"/><path d="M918.5 102.4H938.5M918.5 107.3H938.5M918.5 112.2H938.5M923 97.6V116.4M932 97.6V116.4" stroke="#ababab" fill="none"/><rect x="923.4" y="98.2" width="3.8" height="3.8" fill="#e08a3c"/><rect x="923.4" y="103" width="7.8" height="3.8" fill="#3f7fc1"/><rect x="923.4" y="107.9" width="3.8" height="3.8" fill="#e08a3c"/><rect x="923.4" y="112.8" width="2.2" height="3.2" fill="#3f7fc1"/><rect x="928.1" y="109.4" width="12.8" height="10" fill="#fff" stroke="#555"/><path d="M931 113.2H938M931 115.8H938M936.4 111.2L932.8 117.8" stroke="#333" stroke-width="1" fill="none"/></svg>
<svg class="a" style="left:918px;top:132px" width="22" height="18" viewBox="0 0 22 18"><rect x="0.5" y="0.5" width="20.4" height="16" fill="#fff" stroke="#777"/><rect x="5.8" y="4.8" width="14.8" height="11.4" fill="#bcd9dc"/><path d="M0.5 4.5H20.5M0.5 8.5H20.5M0.5 12.5H20.5M5.5 0.5V16.5M10.5 0.5V16.5M15.5 0.5V16.5" stroke="#a0a0a0" fill="none"/></svg>
<svg class="a" style="left:923.4px;top:136px" width="20" height="19" viewBox="0 0 20 19"><path d="M14.6 0.4L5.8 13.6H17.4V0.4Z" fill="#f3f3f3"/><path d="M17.9 1.2L13.6 8.2" stroke="#666" stroke-width="3.3"/><path d="M1 17.2C4.2 16.8 5.6 15 6.8 12.8C8 10.4 11.2 9.4 13 11C14.4 12.8 13 15.4 10.8 16.4C8 17.4 4.2 17.6 1 17.2Z" fill="#3f7fc1"/><circle cx="10.2" cy="13.4" r="1.7" fill="#e4edf7"/></svg>
<svg class="a" style="left:918px;top:165px" width="22" height="18" viewBox="0 0 22 18"><rect x="0.5" y="0.5" width="20.4" height="16" fill="#fff" stroke="#777"/><rect x="5.8" y="4.8" width="14.8" height="7.4" fill="#bcd9dc"/><path d="M0.5 4.5H20.5M0.5 12.5H20.5M5.5 0.5V16.5M15.5 0.5V4.5" stroke="#a0a0a0" fill="none"/></svg>
<svg class="a" style="left:923.4px;top:169px" width="20" height="19" viewBox="0 0 20 19"><path d="M14.6 0.4L5.8 13.6H17.4V0.4Z" fill="#f3f3f3"/><path d="M17.9 1.2L13.6 8.2" stroke="#666" stroke-width="3.3"/><path d="M1 17.2C4.2 16.8 5.6 15 6.8 12.8C8 10.4 11.2 9.4 13 11C14.4 12.8 13 15.4 10.8 16.4C8 17.4 4.2 17.6 1 17.2Z" fill="#3f7fc1"/><circle cx="10.2" cy="13.4" r="1.7" fill="#e4edf7"/></svg>
<svg class="a" style="left:1185px;top:97px" width="23" height="22" viewBox="0 0 23 22"><rect x="0.5" y="0.5" width="12" height="3.4" fill="#fff" stroke="#7d7d7d"/><path d="M6.5 0.5V3.9" stroke="#7d7d7d"/><rect x="0.5" y="13.6" width="12" height="8" fill="#fff" stroke="#7d7d7d"/><path d="M6.5 13.6V21.6" stroke="#7d7d7d"/><path d="M0.5 17.6H12.5" stroke="#7d7d7d"/><rect x="9.6" y="6.6" width="12" height="3.8" fill="#bcd9dc" stroke="#7d7d7d"/><path d="M15.6 6.6V10.4" stroke="#7d7d7d"/><path d="M1.2 8.5H8M4.4 5.2L1.2 8.5L4.4 11.8" fill="none" stroke="#3f7fc1" stroke-width="1.9"/></svg>
<svg class="a" style="left:1185px;top:131px" width="25" height="23" viewBox="0 0 25 23"><rect x="0.5" y="0.5" width="12" height="3.6" fill="#fff" stroke="#7d7d7d"/><path d="M6.5 0.5V4.1" stroke="#7d7d7d"/><rect x="0.5" y="13.8" width="12" height="7.4" fill="#fff" stroke="#7d7d7d"/><path d="M6.5 13.8V21.200000000000003" stroke="#7d7d7d"/><path d="M0.5 17.4H12.5" stroke="#7d7d7d"/><rect x="5.6" y="6.8" width="7" height="4" fill="#bcd9dc" stroke="#7d7d7d"/><path d="M11.4 3.6L22.8 13.8M22.8 3.8L11.8 14.2" fill="none" stroke="#dc8434" stroke-width="2.5" stroke-linecap="round"/></svg>
<svg class="a" style="left:1185px;top:163px" width="23" height="26" viewBox="0 0 23 26"><path d="M0.5 0.6V5.4M17.5 0.6V5.4M1.6 3H16.4M4 0.9L1.6 3L4 5.1M14 0.9L16.4 3L14 5.1" fill="none" stroke="#3f7fc1" stroke-width="1.35"/><rect x="0.5" y="7.2" width="21" height="14.2" fill="#fff" stroke="#7d7d7d"/><path d="M5.4 7.2V21.4M13.4 7.2V21.4M17.6 7.2V21.4M0.5 10H21.5M0.5 18.4H21.5" stroke="#a9a9a9" fill="none"/><rect x="6.4" y="10.8" width="6.2" height="7" fill="#3f7fc1"/><path d="M0.5 21.4V24.2H8L9.6 22.8H11.4L13 24.2H21.5V21.4" fill="#fff" stroke="#7d7d7d"/></svg>
<svg class="a" style="left:1336px;top:130px" width="22" height="24" viewBox="0 0 22 24"><rect x="0.5" y="0.5" width="20.4" height="22" fill="#fff" stroke="#8a8a8a"/><rect x="0" y="0" width="21.4" height="3.2" fill="#777"/><path d="M10.6 6.6V17.6M5.6 13L10.6 18L15.6 13" fill="none" stroke="#3f7fc1" stroke-width="2.6"/></svg>
<svg class="a" style="left:1336px;top:165px" width="23" height="22" viewBox="0 0 23 22"><path d="M13.2 1.2a2 2 0 0 1 2.8 0L21 6.4a2 2 0 0 1 0 2.8L10.6 19.6a2 2 0 0 1-2.8 0L2.4 14.6a2 2 0 0 1 0-2.8Z" fill="#eaa878"/><path d="M5.8 8.8L13.4 16.6" stroke="#f3f3f3" stroke-width="1.2"/></svg>
</div></body></html>
